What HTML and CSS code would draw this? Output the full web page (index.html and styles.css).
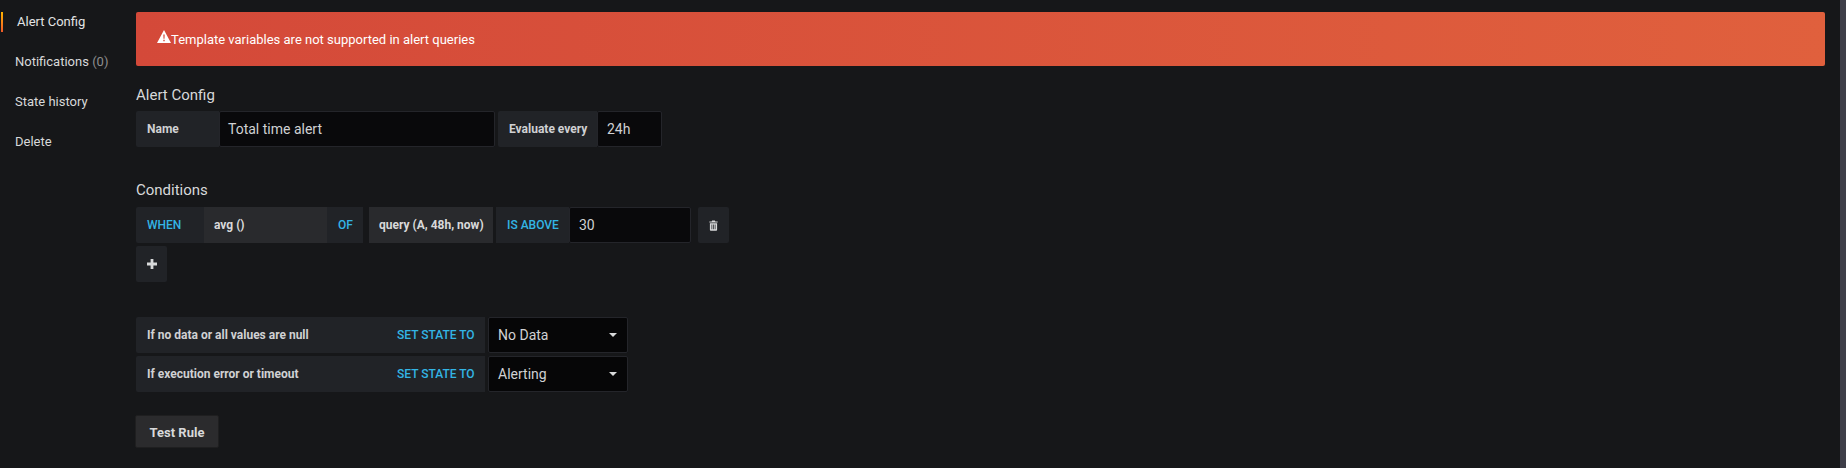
FILE: index.html
```html
<!DOCTYPE html>
<html lang="en">

<head>
    <meta charset="UTF-8">
    <title>Alert Config</title>
    <link rel="stylesheet" href="styles.css">
</head>

<body>
    <div class="page">
        <ul class="side-nav">
            <li class="active">Alert Config</li>
            <li>Notifications <span class="muted">(0)</span></li>
            <li>State history</li>
            <li>Delete</li>
        </ul>

        <div class="main">
            <div class="alert-box">
                <svg class="alert-icon" viewBox="0 0 14 13">
                    <path fill-rule="evenodd" d="M7 0 L14 13 H0 Z M6.3 4.6 L6.5 8.8 H7.5 L7.7 4.6 Z M6.3 9.8 V11.2 H7.7 V9.8 Z"/>
                </svg>
                <span>Template variables are not supported in alert queries</span>
            </div>

            <h5 class="section-title title-config">Alert Config</h5>
            <div class="form-row">
                <div class="group">
                    <label class="lbl lbl-name">Name</label>
                    <div class="field field-name">Total time alert</div>
                </div>
                <div class="group">
                    <label class="lbl lbl-eval">Evaluate every</label>
                    <div class="field field-eval">24h</div>
                </div>
            </div>

            <h5 class="section-title title-cond">Conditions</h5>
            <div class="form-row">
                <div class="group">
                    <span class="kw kw-when">WHEN</span>
                    <span class="seg seg-avg">avg ()</span>
                    <span class="kw kw-of">OF</span>
                </div>
                <span class="seg seg-query">query (A, 48h, now)</span>
                <div class="group">
                    <span class="kw kw-above">IS ABOVE</span>
                    <div class="field field-value">30</div>
                </div>
                <span class="icon-btn btn-trash">
                    <svg viewBox="0 0 10 12" width="9" height="11">
                        <path fill-rule="evenodd" d="M3.5 0.5 H6.5 L7 1.5 H9.6 V2.8 H0.4 V1.5 H3 Z M1 3.5 H9 V10.8 Q9 11.8 8 11.8 H2 Q1 11.8 1 10.8 Z M2.8 5 V10.3 H3.6 V5 Z M4.6 5 V10.3 H5.4 V5 Z M6.4 5 V10.3 H7.2 V5 Z"/>
                    </svg>
                </span>
            </div>
            <div class="form-row row-plus">
                <span class="icon-btn btn-plus">
                    <svg viewBox="0 0 10 10" width="10" height="10">
                        <path d="M3.6 0 H6.4 V3.6 H10 V6.4 H6.4 V10 H3.6 V6.4 H0 V3.6 H3.6 Z"/>
                    </svg>
                </span>
            </div>

            <div class="state-rows">
                <div class="form-row">
                    <label class="lbl lbl-state">If no data or all values are null</label>
                    <span class="kw kw-set">SET STATE TO</span>
                    <div class="select">No Data<i class="caret"></i></div>
                </div>
                <div class="form-row">
                    <label class="lbl lbl-state">If execution error or timeout</label>
                    <span class="kw kw-set">SET STATE TO</span>
                    <div class="select">Alerting<i class="caret"></i></div>
                </div>
            </div>

            <button class="btn-test">Test Rule</button>
        </div>

        <div class="scroll-track"></div>
    </div>
</body>

</html>
```

FILE: styles.css
```css
* {
    margin: 0;
    padding: 0;
    box-sizing: border-box;
}

body {
    background-color: #161719;
    color: #d8d9da;
    font-family: Roboto, "Liberation Sans", sans-serif;
    font-size: 13px;
    overflow: hidden;
}

.page {
    display: flex;
    height: 468px;
}

.side-nav {
    list-style: none;
    width: 136px;
    flex-shrink: 0;
    padding-top: 2px;
    font-size: 13px;
}

.side-nav li {
    height: 40px;
    line-height: 40px;
    padding-left: 15px;
    color: #d8d9da;
}

.side-nav li.active {
    position: relative;
    padding-left: 17px;
    color: #e3e3e4;
}

.side-nav li.active::before {
    content: "";
    position: absolute;
    left: 1px;
    top: 10px;
    width: 2px;
    height: 20px;
    background: linear-gradient(180deg, #ffb300, #f05a28);
}

.muted {
    color: #8e8e8e;
}

.main {
    flex: 1;
    padding-top: 12px;
}

.alert-box {
    display: flex;
    align-items: center;
    height: 54px;
    padding-left: 21px;
    border-radius: 2px;
    background: linear-gradient(90deg, #d44939, #e0603d);
    color: #fff;
    font-size: 13px;
}

.alert-icon {
    width: 14px;
    height: 13px;
    margin-top: -6px;
    fill: #fff;
}

.section-title {
    font-size: 15px;
    font-weight: 400;
    line-height: 18px;
    color: #d8d9da;
}

.title-config {
    margin-top: 20px;
    margin-bottom: 7px;
}

.title-cond {
    margin-top: 34px;
    margin-bottom: 8px;
}

.form-row {
    display: flex;
    height: 36px;
    gap: 3px;
}

.group {
    display: flex;
    height: 36px;
}

.lbl,
.kw {
    display: flex;
    align-items: center;
    height: 36px;
    background-color: #212327;
    font-size: 12px;
    font-weight: 500;
}

.lbl {
    color: #d0d1d3;
    padding-left: 11px;
    border-radius: 2px 0 0 2px;
    font-weight: 700;
}

.lbl-name {
    width: 83px;
}

.lbl-eval {
    width: 99px;
    padding-left: 11px;
}

.lbl-state {
    width: 250px;
}

.kw {
    color: #33b5e5;
    padding-left: 11px;
}

.kw-when {
    width: 68px;
    border-radius: 2px 0 0 2px;
}

.kw-of {
    width: 36px;
    padding-left: 11px;
}

.kw-above {
    width: 73px;
    padding-left: 11px;
}

.kw-set {
    width: 99px;
    margin-left: -3px;
    padding-left: 11px;
}

.seg {
    display: flex;
    align-items: center;
    height: 36px;
    padding-left: 10px;
    background-color: #292a2d;
    color: #d8d9da;
    font-size: 12px;
    font-weight: 700;
}

.seg-avg {
    width: 123px;
}

.seg-query {
    width: 124px;
    margin-left: 3px;
}

.field {
    display: flex;
    align-items: center;
    height: 36px;
    padding-left: 9px;
    background-color: #09090b;
    border: 1px solid #24252a;
    border-radius: 2px;
    font-size: 14px;
    color: #d0d1d3;
}

.field-name {
    width: 276px;
    padding-left: 8px;
}

.field-eval {
    width: 65px;
}

.field-value {
    width: 122px;
}

.icon-btn {
    display: flex;
    align-items: center;
    justify-content: center;
    width: 31px;
    height: 36px;
    background-color: #212327;
    border-radius: 2px;
}

.icon-btn svg {
    fill: #d8d9da;
}

.btn-trash {
    margin-left: 4px;
}

.row-plus {
    margin-top: 3px;
}

.state-rows {
    display: flex;
    flex-direction: column;
    gap: 3px;
    margin-top: 35px;
}

.select {
    position: relative;
    display: flex;
    align-items: center;
    width: 140px;
    height: 36px;
    padding-left: 9px;
    background-color: #060607;
    border: 1px solid #24252a;
    border-radius: 2px;
    font-size: 14px;
    color: #d0d1d3;
}

.caret {
    position: absolute;
    right: 10px;
    top: 15px;
    border-top: 4px solid #d8d9da;
    border-left: 4px solid transparent;
    border-right: 4px solid transparent;
}

.btn-test {
    display: block;
    width: 84px;
    height: 33px;
    margin-top: 23px;
    margin-left: -1px;
    padding-top: 1px;
    background-color: #2b2b2d;
    border: 1px solid #1f1f20;
    border-radius: 2px;
    color: #d8d9da;
    font-family: Roboto, "Liberation Sans", sans-serif;
    font-size: 13px;
    font-weight: 700;
}

.scroll-track {
    width: 6px;
    flex-shrink: 0;
    margin-left: 15px;
    background-color: #3e3e48;
}
```
